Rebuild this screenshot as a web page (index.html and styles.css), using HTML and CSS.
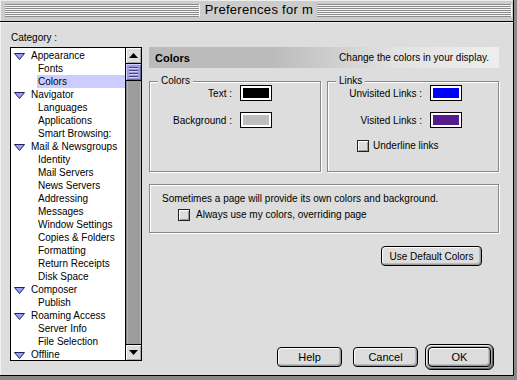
FILE: index.html
```html
<!DOCTYPE html>
<html>
<head>
<meta charset="utf-8">
<title>Preferences</title>
<link rel="stylesheet" href="styles.css">
</head>
<body>
<div class="window">
  <div class="titlebar">
    <div class="stripes"></div>
    <div class="title">Preferences for m</div>
    <div class="stripes"></div>
  </div>
  <div class="content">
    <div class="sidebar">
      <div class="cat-label">Category :</div>
      <div class="listbox">
        <ul class="tree">
          <li class="parent"><svg class="tri" viewBox="0 0 11 7" width="11" height="7"><polygon points="0.5,0.5 10.5,0.5 5.5,6.5" fill="#9a9aff" stroke="#22225a"/></svg>Appearance</li>
          <li class="child">Fonts</li>
          <li class="child selected">Colors</li>
          <li class="parent"><svg class="tri" viewBox="0 0 11 7" width="11" height="7"><polygon points="0.5,0.5 10.5,0.5 5.5,6.5" fill="#9a9aff" stroke="#22225a"/></svg>Navigator</li>
          <li class="child">Languages</li>
          <li class="child">Applications</li>
          <li class="child">Smart Browsing:</li>
          <li class="parent"><svg class="tri" viewBox="0 0 11 7" width="11" height="7"><polygon points="0.5,0.5 10.5,0.5 5.5,6.5" fill="#9a9aff" stroke="#22225a"/></svg>Mail &amp; Newsgroups</li>
          <li class="child">Identity</li>
          <li class="child">Mail Servers</li>
          <li class="child">News Servers</li>
          <li class="child">Addressing</li>
          <li class="child">Messages</li>
          <li class="child">Window Settings</li>
          <li class="child">Copies &amp; Folders</li>
          <li class="child">Formatting</li>
          <li class="child">Return Receipts</li>
          <li class="child">Disk Space</li>
          <li class="parent"><svg class="tri" viewBox="0 0 11 7" width="11" height="7"><polygon points="0.5,0.5 10.5,0.5 5.5,6.5" fill="#9a9aff" stroke="#22225a"/></svg>Composer</li>
          <li class="child">Publish</li>
          <li class="parent"><svg class="tri" viewBox="0 0 11 7" width="11" height="7"><polygon points="0.5,0.5 10.5,0.5 5.5,6.5" fill="#9a9aff" stroke="#22225a"/></svg>Roaming Access</li>
          <li class="child">Server Info</li>
          <li class="child">File Selection</li>
          <li class="parent"><svg class="tri" viewBox="0 0 11 7" width="11" height="7"><polygon points="0.5,0.5 10.5,0.5 5.5,6.5" fill="#9a9aff" stroke="#22225a"/></svg>Offline</li>
        </ul>
        <div class="scrollbar">
          <div class="sb-btn"><svg viewBox="0 0 9 5" width="9" height="5"><polygon points="4.5,0 9,5 0,5" fill="#000"/></svg></div>
          <div class="sb-thumb"><span></span><span></span><span></span><span></span></div>
          <div class="sb-track"></div>
          <div class="sb-btn down"><svg viewBox="0 0 9 5" width="9" height="5"><polygon points="0,0 9,0 4.5,5" fill="#000"/></svg></div>
        </div>
      </div>
    </div>
    <div class="main">
      <div class="header">
        <span class="header-title">Colors</span>
        <span class="header-desc">Change the colors in your display.</span>
      </div>
      <div class="groups">
        <div class="group colors-group">
          <span class="group-title">Colors</span>
          <div class="field-grid">
            <span class="flabel">Text :</span><span class="swatch"><span class="fill black"></span></span>
            <span class="flabel">Background :</span><span class="swatch"><span class="fill grey"></span></span>
          </div>
        </div>
        <div class="group links-group">
          <span class="group-title">Links</span>
          <div class="field-grid">
            <span class="flabel">Unvisited Links :</span><span class="swatch"><span class="fill blue"></span></span>
            <span class="flabel">Visited Links :</span><span class="swatch"><span class="fill purple"></span></span>
          </div>
          <label class="check underline-check"><span class="box"></span>Underline links</label>
        </div>
      </div>
      <div class="notebox">
        <div class="note">Sometimes a page will provide its own colors and background.</div>
        <label class="check always-check"><span class="box"></span>Always use my colors, overriding page</label>
      </div>
      <div class="default-row">
        <button class="btn default-btn">Use Default Colors</button>
      </div>
      <div class="actions">
        <button class="btn act">Help</button>
        <button class="btn act">Cancel</button>
        <span class="ok-ring"><button class="btn ok">OK</button></span>
      </div>
    </div>
  </div>
</div>
</body>
</html>
```

FILE: styles.css
```css
* { box-sizing: border-box; }
html, body { margin: 0; padding: 0; }
body {
  width: 517px;
  height: 380px;
  background: #8a8a8a;
  font-family: "Liberation Sans", Arial, sans-serif;
  font-size: 10px;
  color: #000;
  overflow: hidden;
}
.window {
  width: 517px;
  height: 380px;
  background: #8a8a8a;
  padding: 0 3px 4px 0;
}
.titlebar {
  height: 22px;
  background: #cccccc;
  border-bottom: 1px solid #000;
  border-right: 1px solid #000;
  display: flex;
  align-items: center;
  padding: 0 1px 0 5px;
  box-shadow: inset 1px 1px 0 #eeeeee;
}
.stripes {
  flex: 1;
  height: 13px;
  margin-top: -1px;
  background: repeating-linear-gradient(to bottom, #8c8c8c 0, #8c8c8c 1px, #f4f4f4 1px, #f4f4f4 2px);
  border-right: 1px solid #f4f4f4;
}
.title {
  padding: 0 4px 0 5px;
  font-size: 13px;
  letter-spacing: 0.3px;
  line-height: 14px;
  margin-top: -1px;
}
.content {
  height: 354px;
  background: #dddddd;
  border-right: 1px solid #000;
  border-bottom: 1px solid #000;
  box-shadow: inset 1px 1px 0 #f2f2f2;
  display: flex;
}
.sidebar {
  width: 149px;
  padding: 10px 7px 0 10px;
}
.cat-label {
  height: 12px;
  line-height: 12px;
  margin-bottom: 3px;
  padding-left: 1px;
}
.listbox {
  width: 132px;
  height: 314px;
  border: 1px solid #000;
  background: #fff;
  display: flex;
}
.tree {
  list-style: none;
  margin: 0;
  padding: 1px 0 0 0;
  flex: 1;
}
.tree li {
  height: 13px;
  line-height: 13px;
  white-space: nowrap;
}
.tree .parent {
  display: flex;
  align-items: center;
  padding-left: 3px;
}
.tree .tri { margin-right: 6px; margin-top: 1px; }
.tree .child { padding-left: 27px; }
.tree .selected { background: #ccccff; margin-left: 26px; padding-left: 1px; }
.scrollbar {
  width: 16px;
  border-left: 1px solid #000;
  display: flex;
  flex-direction: column;
  background: #999;
}
.sb-btn {
  height: 16px;
  background: #dddddd;
  border-bottom: 1px solid #000;
  box-shadow: inset 1px 1px 0 #fff, inset -1px -1px 0 #aaa;
  display: flex;
  align-items: center;
  justify-content: center;
}
.sb-btn.down { border-bottom: none; border-top: 1px solid #000; }
.sb-thumb {
  height: 17px;
  background: #9c9cd6;
  border-bottom: 1px solid #000;
  box-shadow: inset 1px 1px 0 #ccccff, inset -1px -1px 0 #66669a;
  display: flex;
  flex-direction: column;
  justify-content: center;
  gap: 1px;
  padding: 0 3px;
}
.sb-thumb span { height: 1px; background: #44447a; box-shadow: 0 1px 0 #d0d0ff; margin-bottom: 1px; }
.sb-track {
  flex: 1;
  background: #9c9c9c;
  box-shadow: inset 1px 0 0 #888, inset 2px 0 0 #b0b0b0, inset -1px 0 0 #b8b8b8;
}
.main {
  width: 350px;
  padding-top: 25px;
  display: flex;
  flex-direction: column;
}
.header {
  height: 21px;
  display: flex;
  align-items: center;
  justify-content: space-between;
  padding: 0 10px 0 6px;
  background: linear-gradient(to right, #bbbbbb 0%, #bbbbbb 35%, #e2e2e2 70%, #eeeeee 100%);
}
.header-title { font-weight: bold; font-size: 11px; }
.groups {
  display: flex;
  justify-content: space-between;
  margin-top: 13px;
}
.group {
  position: relative;
  width: 172px;
  height: 91px;
  border: 1px solid #888;
  box-shadow: 1px 1px 0 #fff, inset 1px 1px 0 #fff;
  padding-top: 3px;
}
.group-title {
  position: absolute;
  top: -7px;
  left: 8px;
  padding: 0 3px;
  line-height: 12px;
  background: #dddddd;
}
.field-grid {
  display: grid;
  column-gap: 8px;
  row-gap: 11px;
  align-items: center;
}
.colors-group .field-grid { grid-template-columns: 82px 32px; }
.links-group .field-grid { grid-template-columns: 94px 32px; }
.flabel { text-align: right; }
.swatch {
  width: 32px;
  height: 16px;
  border: 1px solid #000;
  background: #fff;
  padding: 2px;
  display: block;
}
.fill { display: block; width: 100%; height: 100%; }
.fill.black { background: #000; border: 0; }
.swatch:first-of-type .fill.black { }
.fill.grey { background: #bebebe; }
.fill.blue { background: #0000ff; }
.fill.purple { background: #551a8b; }
.check {
  display: flex;
  align-items: center;
  gap: 4px;
  line-height: 12px;
}
.box {
  width: 12px;
  height: 12px;
  border: 1px solid #222;
  background: #dddddd;
  box-shadow: inset 1px 1px 0 #fff, inset -1px -1px 0 #999;
  display: inline-block;
}
.underline-check { margin: 12px 0 0 29px; }
.notebox {
  margin-top: 12px;
  height: 49px;
  border: 1px solid #888;
  box-shadow: 1px 1px 0 #fff, inset 1px 1px 0 #fff;
  padding: 8px 0 0 12px;
}
.note { line-height: 12px; }
.always-check { margin: 4px 0 0 16px; gap: 6px; }
.default-row {
  display: flex;
  justify-content: flex-end;
  padding-right: 17px;
  margin-top: 13px;
}
.btn {
  font-family: "Liberation Sans", Arial, sans-serif;
  font-size: 10px;
  color: #000;
  background: #dddddd;
  border: 1px solid #000;
  border-radius: 4px;
  box-shadow: inset 1px 1px 0 #fff, inset -1px -1px 0 #999, inset -2px -2px 0 #bbb;
  padding: 0;
  margin: 0;
  height: 20px;
}
.default-btn { width: 101px; }
.actions {
  margin-top: auto;
  margin-bottom: 5px;
  display: flex;
  justify-content: flex-end;
  align-items: center;
  padding-right: 5px;
}
.act { width: 65px; font-size: 11px; }
.act + .act { margin-left: 11px; }
.ok-ring {
  margin-left: 7px;
  width: 69px;
  height: 26px;
  border: 1px solid #000;
  border-radius: 6px;
  background: #aaaaaa;
  box-shadow: inset 1px 1px 0 #eee, inset -1px -1px 0 #666;
  padding: 2px;
  display: flex;
}
.ok { width: 100%; height: 100%; font-size: 11px; }
```
